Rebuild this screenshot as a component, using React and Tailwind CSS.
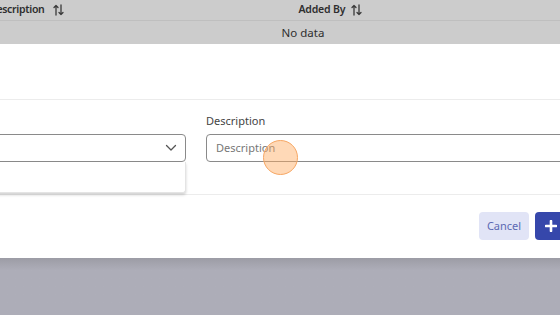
import React from "react";

function SortIcon() {
  return (
    <svg width="11" height="12" viewBox="0 0 11 12" fill="none" stroke="#3a3a3a" strokeWidth="1.3" strokeLinecap="round" strokeLinejoin="round">
      <path d="M3 11V1.5M1 3.5L3 1.5L5 3.5" />
      <path d="M8 1V10.5M6 8.5L8 10.5L10 8.5" />
    </svg>
  );
}

export default function App() {
  return (
    <div className="w-[560px] h-[315px] overflow-hidden flex flex-col bg-[#adadb8]" style={{ fontFamily: '"Noto Sans", "Open Sans", sans-serif' }}>
      {/* dimmed table behind */}
      <div className="flex flex-col bg-[#cccccc] text-[#2e2e2e] text-[11.5px]">
        <div className="h-[21px] flex items-center border-b border-[#bfbfbf] relative">
          <div className="flex items-center gap-[8px] ml-[-11px] font-semibold text-[10.5px] tracking-[-0.3px]">
            <span>Description</span>
            <SortIcon />
          </div>
          <div className="flex items-center gap-[6px] ml-[235px] font-semibold text-[10.5px] tracking-[-0.2px]">
            <span>Added By</span>
            <SortIcon />
          </div>
        </div>
        <div className="h-[23px] flex items-center justify-center pl-[46px]">No data</div>
      </div>

      {/* modal */}
      <div className="h-[214px] bg-white flex flex-col">
        <div className="h-[56px] border-b border-[#ececec]"></div>
        <div className="h-[95px] flex pt-[14px] border-b border-[#ececec]">
          <div className="w-[196px] ml-[-10px] flex flex-col pt-[20px] relative">
            <div className="h-[28px] border border-[#8a8a8a] rounded-[4px] flex items-center justify-end pr-[8px]">
              <svg width="12" height="8" viewBox="0 0 12 8" fill="none" stroke="#555" strokeWidth="1.3" strokeLinecap="round" strokeLinejoin="round">
                <path d="M1.5 1.5L6 6L10.5 1.5" />
              </svg>
            </div>
            <div className="absolute left-0 right-0 top-[48px] h-[31px] bg-white rounded-b-[3px] shadow-[0_2px_3px_rgba(0,0,0,0.18)] border-x border-b border-[#e4e4e4]"></div>
          </div>
          <div className="flex-1 ml-[20px] mr-[-10px] flex flex-col">
            <div className="text-[11px] text-[#444] h-[20px] leading-[14px]">Description</div>
            <div className="h-[28px] border border-[#8a8a8a] rounded-[4px] flex items-center pl-[9px] text-[11px] text-[#777] relative">
              Description
              <div className="absolute left-[56px] top-[5px] w-[35px] h-[35px] rounded-full bg-[rgba(255,170,95,0.45)] border border-[#f7a764]"></div>
            </div>
          </div>
        </div>
        <div className="flex-1 flex items-start justify-end pt-[17px] gap-[6px] mr-[-30px]">
          <div className="w-[50px] h-[28px] rounded-[4px] bg-[#e1e4f6] text-[#5c69b3] text-[11px] flex items-center justify-center">Cancel</div>
          <div className="w-[55px] h-[28px] rounded-[4px] bg-[#3647ab] flex items-center pl-[10px]">
            <svg width="12" height="12" viewBox="0 0 12 12" stroke="white" strokeWidth="2.6" strokeLinecap="round">
              <path d="M6 1V11M1 6H11" />
            </svg>
          </div>
        </div>
      </div>

      {/* overlay below */}
      <div className="flex-1 bg-gradient-to-b from-[#9c9ca5] to-[#adadb8] to-[12px]"></div>
    </div>
  );
}
